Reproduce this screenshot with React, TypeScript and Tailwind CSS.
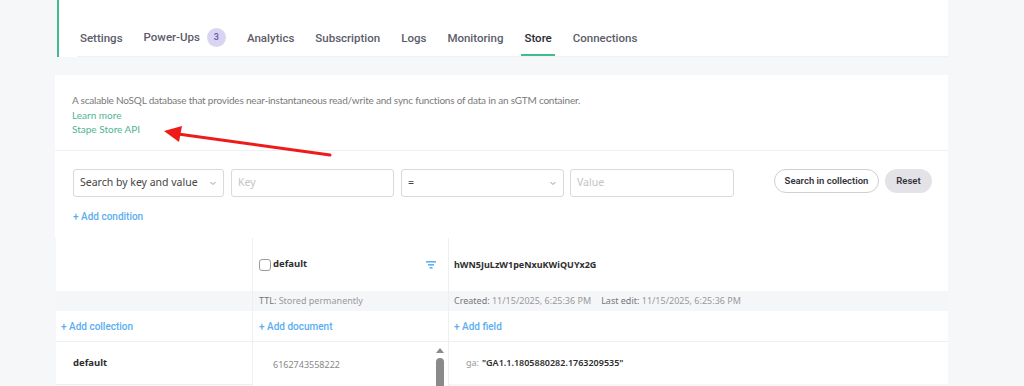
import React from 'react';

const tabs = ['Settings', 'Power-Ups', 'Analytics', 'Subscription', 'Logs', 'Monitoring', 'Store', 'Connections'];

const plex = { fontFamily: 'Roboto, "Noto Sans", sans-serif' };
const segoe = { fontFamily: 'Lato, "Noto Sans", sans-serif' };

const Chevron = () => (
  <svg width="8" height="8" viewBox="0 0 8 8" className="text-[#9a9a9a]">
    <path d="M1.5 3l2.5 2.5L6.5 3" fill="none" stroke="currentColor" strokeWidth="1" />
  </svg>
);

const FilterIcon = () => (
  <svg width="10" height="8" viewBox="0 0 10 8">
    <rect x="0" y="0" width="10" height="1.6" fill="#5fb2f2" />
    <rect x="2" y="3" width="6" height="1.6" fill="#5fb2f2" />
    <rect x="3.5" y="6" width="3" height="1.6" fill="#5fb2f2" />
  </svg>
);

export default function App() {
  return (
    <div
      className="relative h-[386px] w-full overflow-hidden bg-[#f6f7f9]"
      style={{ fontFamily: '"Noto Sans", "Open Sans", sans-serif' }}
    >
      {/* Tabs card */}
      <div className="ml-[57px] flex h-[57px] w-[891px] flex-col justify-end border-l-2 border-[#3fbd8c] bg-white">
        <div className="ml-[18px] flex items-end gap-[15px] border-b border-[#f0f1f3]" style={plex}>
          {tabs.map((t) => (
            <div
              key={t}
              className={`flex items-center gap-[7px] px-[3px] pb-[7px] text-[11.5px] font-medium ${
                t === 'Store' ? 'border-b-2 border-[#3fbd8c] text-[#2a2a33]' : 'border-b-2 border-transparent text-[#5c5c6a]'
              }`}
            >
              <span>{t}</span>
              {t === 'Power-Ups' && (
                <span className="flex h-[19px] w-[19px] items-center justify-center rounded-full bg-[#d9d5f0] text-[9px] font-semibold text-[#6b5fb5]">
                  3
                </span>
              )}
            </div>
          ))}
        </div>
      </div>

      {/* Store card */}
      <div className="ml-[55px] mt-[18px] w-[893px] bg-white">
        <div className="h-[76px] border-b border-[#eff0f2] px-[17px] pt-[18px] text-[10px] leading-[14.5px]" style={segoe}>
          <div className="tracking-[-0.2px] text-[#7a7a7a]">
            A scalable NoSQL database that provides near-instantaneous read/write and sync functions of data in an sGTM container.
          </div>
          <div className="text-[#4fb58f]">Learn more</div>
          <div className="text-[#4fb58f]">Stape Store API</div>
        </div>
        <div className="h-[87px] px-[18px] pt-[18px]">
          <div className="flex items-start">
            <div className="flex h-[28px] w-[151px] shrink-0 items-center justify-between rounded-[3px] border border-[#d9d9d9] px-[6px] text-[10.5px] text-[#444]">
              <span>Search by key and value</span>
              <Chevron />
            </div>
            <div className="ml-[7px] flex h-[28px] w-[163px] shrink-0 items-center rounded-[3px] border border-[#d9d9d9] px-[6px] text-[10.5px] text-[#c4c4c4]">
              Key
            </div>
            <div className="ml-[7px] flex h-[28px] w-[163px] shrink-0 items-center justify-between rounded-[3px] border border-[#d9d9d9] px-[6px] text-[10.5px] text-[#444]">
              <span>=</span>
              <Chevron />
            </div>
            <div className="ml-[6px] flex h-[28px] w-[164px] shrink-0 items-center rounded-[3px] border border-[#d9d9d9] px-[6px] text-[10.5px] text-[#c4c4c4]">
              Value
            </div>
            <div className="ml-[40px] flex h-[24px] w-[105px] shrink-0 items-center justify-center rounded-full border border-[#cfcfd4] text-[9.5px] font-semibold text-[#33333d]" style={plex}>
              Search in collection
            </div>
            <div className="ml-[6px] flex h-[24px] w-[47px] shrink-0 items-center justify-center rounded-full bg-[#e3e3e7] text-[9.5px] font-semibold text-[#33333d]" style={plex}>
              Reset
            </div>
          </div>
          <div className="mt-[12px] text-[10px] font-medium text-[#5aaef0]" style={plex}>
            + Add condition
          </div>
        </div>
      </div>

      {/* Collections table */}
      <div className="ml-[56px] flex w-[892px]">
        {/* collections */}
        <div className="w-[196px]">
          <div className="h-[53px] bg-white" />
          <div className="h-[20px] bg-[#f5f6f8]" />
          <div className="flex h-[31px] items-center border-b border-[#eeeff1] bg-white pl-[5px] text-[10px] font-medium text-[#5aaef0]" style={plex}>
            + Add collection
          </div>
          <div className="flex h-[43px] items-center border-b border-[#eeeff1] bg-white pl-[17px] text-[9.5px] font-bold text-[#2e2e2e]">
            default
          </div>
        </div>
        {/* documents */}
        <div className="w-[196px] border-l border-[#eeeff1]">
          <div className="flex h-[53px] items-center justify-between bg-white pl-[6px] pr-[12px]">
            <div className="flex items-center gap-[2px]">
              <span className="h-[12px] w-[12px] rounded-[3px] border border-[#9b9b9b] bg-white" />
              <span className="text-[9.5px] font-bold text-[#2e2e2e]">default</span>
            </div>
            <FilterIcon />
          </div>
          <div className="flex h-[20px] items-center bg-[#f5f6f8] pl-[6px] text-[9px] text-[#999]">
            <span className="text-[#777]">TTL:</span>&nbsp;Stored permanently
          </div>
          <div className="flex h-[31px] items-center border-b border-[#eeeff1] bg-white pl-[6px] text-[10px] font-medium text-[#5aaef0]" style={plex}>
            + Add document
          </div>
          <div className="relative flex h-[45px] items-center bg-white pl-[20px] pt-[1px] text-[9px] text-[#888]">
            6162743558222
            <div className="absolute right-[4px] top-[6px] flex flex-col items-center">
              <span className="h-0 w-0 border-x-[4px] border-b-[5px] border-x-transparent border-b-[#8a8a8a]" />
              <span className="mt-[5px] h-[40px] w-[8px] rounded-t-full bg-[#8a8a8a]" />
            </div>
          </div>
        </div>
        {/* fields */}
        <div className="flex-1 border-l border-[#eeeff1]">
          <div className="flex h-[53px] items-center bg-white pl-[5px] text-[9px] font-bold text-[#2e2e2e]">
            hWN5JuLzW1peNxuKWiQUYx2G
          </div>
          <div className="flex h-[20px] items-center gap-[10px] bg-[#f5f6f8] pl-[5px] text-[9px] text-[#999]">
            <span><span className="text-[#777]">Created:</span> 11/15/2025, 6:25:36 PM</span>
            <span><span className="text-[#777]">Last edit:</span> 11/15/2025, 6:25:36 PM</span>
          </div>
          <div className="flex h-[31px] items-center border-b border-[#eeeff1] bg-white pl-[5px] text-[10px] font-medium text-[#5aaef0]" style={plex}>
            + Add field
          </div>
          <div className="flex h-[42px] items-center bg-white pl-[17px] text-[9px]">
            <span className="text-[#999]">ga:</span>
            <span className="ml-[3px] font-semibold text-[#2e2e2e]">"GA1.1.1805880282.1763209535"</span>
          </div>
        </div>
      </div>

      {/* annotation arrow */}
      <svg className="absolute left-0 top-0" width="1024" height="386" viewBox="0 0 1024 386">
        <line x1="330" y1="155" x2="178" y2="134" stroke="#ee1b1b" strokeWidth="3" strokeLinecap="round" />
        <polygon points="164,131 182,126 179,142" fill="#ee1b1b" />
      </svg>
    </div>
  );
}
